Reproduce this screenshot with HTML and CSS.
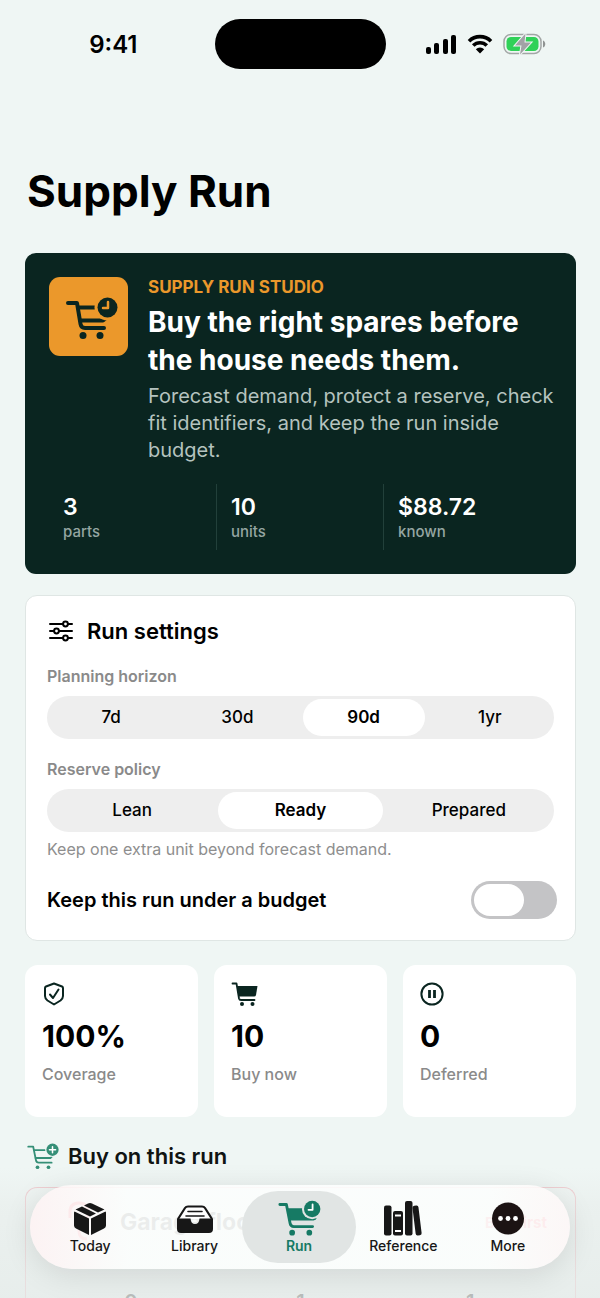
FILE: index.html
```html
<!DOCTYPE html>
<html lang="en">
<head>
<meta charset="utf-8">
<meta name="viewport" content="width=device-width, initial-scale=1">
<title>Supply Run</title>
<link rel="stylesheet" href="styles.css">
</head>

<body>

<div class="app">

	<header class="status">
		<span class="time">9:41</span>
		<span class="island"></span>
		<span class="signals">
			<svg width="31" height="20" viewBox="0 0 31 20">
				<rect x="0" y="13" width="5" height="7" rx="2"/>
				<rect x="8" y="9" width="5" height="11" rx="2"/>
				<rect x="17" y="5" width="5" height="15" rx="2"/>
				<rect x="25" y="1" width="5" height="19" rx="2"/>
			</svg>
			<svg width="26" height="20" viewBox="0 0 26 20">
				<path d="M2 7.200a15.600 15.600 0 0 1 22 0M6.200 11.500a9.600 9.600 0 0 1 13.600 0" fill="none" stroke="#000" stroke-width="3.600"/>
				<path d="M13 19.500l-4.200-4.300a6 6 0 0 1 8.400 0z"/>
			</svg>
			<svg width="43" height="22" viewBox="0 0 43 22">
				<rect x="1" y="1.500" width="37" height="19" rx="7" fill="none" stroke="#a2a6a5" stroke-width="1.500"/>
				<rect x="3.500" y="4" width="32" height="14" rx="4.500" fill="#30d158"/>
				<path d="M40 7.500c3 1 3 6 0 7z" fill="#8f9392"/>
				<path d="M22.500 .500L12 12.500h6.500L17 21.500 28 9.500h-6.500z" fill="#a2a2a6" stroke="#f0f6f4" stroke-width="2" paint-order="stroke"/>
			</svg>
		</span>
	</header>

	<main>
		<h1>Supply Run</h1>

		<section class="hero">
			<div class="intro">
				<div class="badge">
					<svg width="60" height="46" viewBox="-7 -2 60 46">
						<g fill="none" stroke="#0a2520" stroke-width="4" stroke-linecap="round" stroke-linejoin="round">
							<path d="M2 7h9l3.500 21q.700 4 4.500 4h19"/>
							<path d="M13 11.500h19M15 24.500h22l5-4"/>
						</g>
						<circle cx="17" cy="39.500" r="3.500" fill="#0a2520"/>
						<circle cx="34" cy="39.500" r="3.500" fill="#0a2520"/>
						<circle cx="41.500" cy="11.500" r="13" fill="#eb982b"/>
						<circle cx="41.500" cy="11.500" r="10" fill="#0a2520"/>
						<path d="M42 6v6h-5" fill="none" stroke="#eb982b" stroke-width="2.500" stroke-linecap="round" stroke-linejoin="round"/>
					</svg>
				</div>
				<div class="pitch">
					<p class="kicker">SUPPLY RUN STUDIO</p>
					<h2>Buy the right spares before the house needs them.</h2>
					<p class="lead">Forecast demand, protect a reserve, check fit identifiers, and keep the run inside budget.</p>
				</div>
			</div>
			<dl class="totals">
				<div><dd>3</dd><dt>parts</dt></div>
				<div><dd>10</dd><dt>units</dt></div>
				<div><dd>$88.72</dd><dt>known</dt></div>
			</dl>
		</section>

		<section class="settings">
			<h3>
				<svg width="26" height="22" viewBox="0 0 26 22" fill="none" stroke="#000" stroke-width="2" stroke-linecap="round">
					<path d="M2 4h13M20 4h4M2 11h4M11 11h13M2 18h13M20 18h4"/>
					<circle cx="17.500" cy="4" r="2.400"/>
					<circle cx="8.500" cy="11" r="2.400"/>
					<circle cx="17.500" cy="18" r="2.400"/>
				</svg>
				Run settings
			</h3>

			<fieldset>
				<legend>Planning horizon</legend>
				<div class="segments">
					<label><input type="radio" name="horizon"><span>7d</span></label>
					<label><input type="radio" name="horizon"><span>30d</span></label>
					<label><input type="radio" name="horizon" checked><span>90d</span></label>
					<label><input type="radio" name="horizon"><span>1yr</span></label>
				</div>
			</fieldset>

			<fieldset>
				<legend>Reserve policy</legend>
				<div class="segments">
					<label><input type="radio" name="policy"><span>Lean</span></label>
					<label><input type="radio" name="policy" checked><span>Ready</span></label>
					<label><input type="radio" name="policy"><span>Prepared</span></label>
				</div>
			</fieldset>
			<p class="hint">Keep one extra unit beyond forecast demand.</p>

			<div class="budget">
				<label for="budget">Keep this run under a budget</label>
				<input type="checkbox" id="budget" class="toggle">
			</div>
		</section>

		<section class="tiles">
			<div class="tile">
				<svg width="24" height="24" viewBox="0 0 24 24" fill="none" stroke="#0a2520" stroke-width="2" stroke-linecap="round" stroke-linejoin="round">
					<path d="M12 1.500L20 4.500Q21 5 21 6v8q0 2.500-2.500 4.500L12 22.500l-6.500-4Q3 16.500 3 14V6q0-1 1-1.500z"/>
					<path d="M8 12.500l3 3.500 5.500-8.500"/>
				</svg>
				<strong>100%</strong>
				<span>Coverage</span>
			</div>
			<div class="tile">
				<svg width="28" height="24" viewBox="0 0 28 24">
					<path d="M6 4h20.500l-1.500 9q-.300 1.500-2 1.500H8z" fill="#0a2520"/>
					<path d="M1.500 1.500h4l2.500 15q.300 1.500 2 1.500h13.500" fill="none" stroke="#0a2520" stroke-width="1.800" stroke-linecap="round" stroke-linejoin="round"/>
					<circle cx="11" cy="22" r="2" fill="#0a2520"/>
					<circle cx="21.500" cy="22" r="2" fill="#0a2520"/>
				</svg>
				<strong>10</strong>
				<span>Buy now</span>
			</div>
			<div class="tile">
				<svg width="24" height="24" viewBox="0 0 24 24" fill="none" stroke="#0a2520">
					<circle cx="12" cy="12" r="10.600" stroke-width="2"/>
					<path d="M9.500 8v8M14.500 8v8" stroke-width="2.800"/>
				</svg>
				<strong>0</strong>
				<span>Deferred</span>
			</div>
		</section>

		<h3 class="list-title">
			<svg width="32" height="27" viewBox="0 0 52 44">
				<g fill="none" stroke="#358f77" stroke-width="3" stroke-linecap="round" stroke-linejoin="round">
					<path d="M2 6h8l4.500 22q.700 4 4.500 4h21"/>
					<path d="M12 11.500h20M14 24.500h24l4-4"/>
				</g>
				<circle cx="17" cy="39.500" r="3" fill="#358f77"/>
				<circle cx="35" cy="39.500" r="3" fill="#358f77"/>
				<circle cx="41.500" cy="11" r="12" fill="#eff6f4"/>
				<circle cx="41.500" cy="11" r="10" fill="#358f77"/>
				<path d="M41.500 6v10M36.500 11h10" stroke="#fff" stroke-width="2.500" stroke-linecap="round"/>
			</svg>
			Buy on this run
		</h3>

		<article class="part">
			<div class="part-head">
				<svg width="34" height="44" viewBox="0 0 34 44" fill="none" stroke="#ff3b50" stroke-width="3">
					<path d="M4 18v-6q0-9 9-9t9 9-9 13v6q0 8 8 8"/>
				</svg>
				<strong>Garage flood battery</strong>
				<em>Buy first</em>
			</div>
			<div class="counts">
				<span>0</span><span>1</span><span>1</span>
			</div>
		</article>
	</main>

	<div class="fade"></div>

	<nav>
		<a href="#today">
			<svg width="36" height="36" viewBox="0 0 36 36" fill="#171717">
				<path d="M2.500 11.500L17 18.500V35L4 28.500Q2 27.500 2 25.500V12.500zM33.500 11.500L19 18.500V35l13-6.500q2-1 2-3V12.500z"/>
				<path d="M3.500 9.500L10 6.500l14 7-6 3zM12 5.500L16 3.500q2-1 4 0L32.500 9.500 26 12.500z"/>
			</svg>
			Today
		</a>
		<a href="#library">
			<svg width="38" height="36" viewBox="0 0 38 36">
				<path d="M2 19L9 8q1-1.500 3-1.500h14q2 0 3 1.500l7 11" fill="#fff" stroke="#171717" stroke-width="2.200"/>
				<path d="M12 11.500h14M10 16h18" stroke="#171717" stroke-width="1.600" stroke-linecap="round"/>
				<path d="M1 18.500h13.500q.500 5.500 4.500 5.500t4.500-5.500H37V29q0 4-4 4H5q-4 0-4-4z" fill="#171717"/>
			</svg>
			Library
		</a>
		<a href="#run" class="active">
			<svg width="43" height="36" viewBox="0 0 52 44">
				<path d="M11 10h39l-3 12q-.500 3-4 3H14z" fill="#167a64"/>
				<path d="M2 5.500h8l4.500 23q.700 4 4.500 4h23" fill="none" stroke="#167a64" stroke-width="3.500" stroke-linecap="round" stroke-linejoin="round"/>
				<circle cx="17" cy="40" r="3.500" fill="#167a64"/>
				<circle cx="38" cy="40" r="3.500" fill="#167a64"/>
				<circle cx="41.500" cy="11" r="12.500" fill="#e1e5e4"/>
				<circle cx="41.500" cy="11" r="10" fill="#167a64"/>
				<path d="M42 5.500v6.500h-5" fill="none" stroke="#fff" stroke-width="2.200" stroke-linecap="round" stroke-linejoin="round"/>
			</svg>
			Run
		</a>
		<a href="#reference">
			<svg width="40" height="36" viewBox="0 0 40 36" fill="#171717">
				<rect x="1" y="5.500" width="7.500" height="30" rx="2"/>
				<rect x="10" y="11" width="10" height="24.500" rx="2"/>
				<rect x="22" y="1" width="7.500" height="34.500" rx="2"/>
				<rect x="31" y="5.500" width="6" height="30" rx="2" transform="rotate(-7 34 20)"/>
				<path d="M12 15.500h6M12 31h6" stroke="#fff" stroke-width="2"/>
			</svg>
			Reference
		</a>
		<a href="#more">
			<svg width="36" height="36" viewBox="0 0 36 36">
				<circle cx="18" cy="18.500" r="16" fill="#1c1313"/>
				<circle cx="10.500" cy="18.500" r="2.400" fill="#fff"/>
				<circle cx="18" cy="18.500" r="2.400" fill="#fff"/>
				<circle cx="25.500" cy="18.500" r="2.400" fill="#fff"/>
			</svg>
			More
		</a>
	</nav>

</div>

</body>
</html>
```
FILE: styles.css
```css
* {
	box-sizing: border-box;
	margin: 0;
	padding: 0;
}

body {
	background-color: #eff6f4;
	color: #000;
	font-family: Inter, "Liberation Sans", sans-serif;
}

svg {
	display: block;
	flex: none;
}

.app {
	position: relative;
	height: 100vh;
	overflow: hidden;
}

/* status bar */
.status {
	display: grid;
	grid-template-columns: 1fr 171px 1fr;
	align-items: center;
	padding-top: 19px;
}

.time {
	justify-self: end;
	margin-right: 77px;
	font-size: 24px;
	font-weight: 600;
}

.island {
	height: 50px;
	border-radius: 25px;
	background-color: #000;
}

.signals {
	display: flex;
	align-items: center;
	gap: 10px;
	padding-left: 40px;
}

main {
	padding: 96px 24px 0 25px;
}

h1 {
	margin-bottom: 36px;
	padding-left: 2px;
	font-size: 44px;
	font-weight: 700;
	line-height: 52px;
}

/* hero card */
.hero {
	padding: 24px 14px 24px 24px;
	border-radius: 11px;
	background-color: #0a2520;
	color: #fff;
}

.intro {
	display: flex;
	gap: 20px;
}

.badge {
	display: flex;
	flex: none;
	align-items: center;
	justify-content: center;
	width: 79px;
	height: 79px;
	border-radius: 11px;
	background-color: #eb982b;
}

.kicker {
	color: #eb982b;
	font-size: 17px;
	font-weight: 700;
	line-height: 20px;
}

.hero h2 {
	margin: 6px 0 4px;
	font-size: 28px;
	font-weight: 700;
	line-height: 38px;
}

.lead {
	color: #b5c3bf;
	font-size: 20px;
	line-height: 27px;
}

.totals {
	display: grid;
	grid-template-columns: repeat(3, 1fr);
	margin: 20px 12px 0 0;
}

.totals div {
	height: 66px;
	padding: 9px 14px;
}

.totals div + div {
	border-left: 1px solid #22403a;
}

.totals dd {
	font-size: 23px;
	font-weight: 600;
	line-height: 28px;
}

.totals dt {
	color: #95a6a2;
	font-size: 15px;
	font-weight: 500;
	line-height: 22px;
}

/* settings card */
.settings {
	margin-top: 21px;
	padding: 21px;
	border: 1px solid #dfe6e4;
	border-radius: 12px;
	background-color: #fff;
}

h3 {
	display: flex;
	align-items: center;
	gap: 13px;
	font-size: 22px;
	font-weight: 600;
	line-height: 28px;
}

.settings h3 {
	padding-left: 1px;
}

fieldset {
	margin-top: 20px;
	border: 0;
}

fieldset + fieldset {
	margin-top: 19px;
}

legend {
	color: #8a8a8a;
	font-size: 16px;
	font-weight: 600;
	line-height: 22px;
}

.segments {
	display: flex;
	gap: 4px;
	margin-top: 9px;
	padding: 3px;
	border-radius: 22px;
	background-color: #eee;
}

.segments label {
	flex: 1;
}

.segments input {
	position: absolute;
	opacity: 0;
}

.segments span {
	display: block;
	border-radius: 19px;
	font-size: 17px;
	font-weight: 500;
	line-height: 37px;
	text-align: center;
}

.segments input:checked + span {
	background-color: #fff;
	font-weight: 600;
}

.hint {
	margin-top: 6px;
	color: #8e8e8e;
	font-size: 16px;
	line-height: 22px;
}

.budget {
	display: flex;
	align-items: center;
	justify-content: space-between;
	margin: 21px -3px 0 0;
}

.budget label {
	font-size: 20px;
	font-weight: 600;
}

.toggle {
	appearance: none;
	width: 86px;
	height: 38px;
	padding: 3px;
	border-radius: 19px;
	background-color: #c4c4c6;
}

.toggle::before {
	content: "";
	display: block;
	width: 50px;
	height: 32px;
	border-radius: 16px;
	background-color: #fff;
}

.toggle:checked {
	background-color: #167a64;
}

.toggle:checked::before {
	margin-left: 30px;
}

/* tiles */
.tiles {
	display: grid;
	grid-template-columns: repeat(3, 1fr);
	gap: 16px;
	margin-top: 24px;
}

.tile {
	height: 152px;
	padding: 17px;
	border-radius: 13px;
	background-color: #fff;
}

.tile strong {
	display: block;
	margin: 12px 0 10px;
	font-size: 30px;
	font-weight: 700;
	line-height: 36px;
}

.tile span {
	color: #8a8a8a;
	font-size: 16px;
	font-weight: 500;
	line-height: 16px;
}

.list-title {
	gap: 9px;
	margin-top: 25px;
	padding-left: 2px;
	color: #101413;
}

/* part card that scrolls under the tab bar */
.part {
	margin-top: 17px;
	border: 1px solid #f0c4c9;
	border-bottom: 0;
	border-radius: 12px;
	background-color: #f0f6f4;
}

.part-head {
	display: flex;
	align-items: center;
	gap: 20px;
	height: 104px;
	padding: 0 28px 36px 40px;
}

.part-head strong {
	flex: 1;
	font-size: 23px;
	font-weight: 700;
}

.part-head em {
	color: #ff3b50;
	font-size: 15px;
	font-style: normal;
	font-weight: 700;
}

.counts {
	display: grid;
	grid-template-columns: repeat(3, 1fr);
	padding: 0 20px;
	color: #555;
	font-size: 20px;
	font-weight: 600;
	line-height: 20px;
	text-align: center;
}

.fade {
	position: absolute;
	right: 0;
	bottom: 0;
	left: 0;
	height: 130px;
	background: linear-gradient(rgba(236, 242, 240, 0), rgba(230, 235, 233, .5) 30%, rgba(228, 234, 232, .7));
}

/* tab bar */
nav {
	position: absolute;
	z-index: 1;
	right: 30px;
	bottom: 29px;
	left: 30px;
	display: flex;
	height: 84px;
	padding: 6px 10px 6px 8px;
	border-radius: 42px;
	background: linear-gradient(90deg, rgba(255, 243, 244, .86), rgba(253, 255, 254, .86) 18%, rgba(253, 255, 254, .86) 85%, rgba(255, 248, 248, .85));
	box-shadow: 0 6px 30px rgba(0, 0, 0, .1);
}

nav a {
	position: relative;
	display: flex;
	flex: 1;
	flex-direction: column;
	align-items: center;
	padding-top: 9px;
	color: #171717;
	font-size: 14px;
	font-weight: 500;
	line-height: 20px;
	text-decoration: none;
}

nav .active {
	color: #167a64;
	font-weight: 600;
}

nav .active::before {
	content: "";
	position: absolute;
	z-index: -1;
	top: 0;
	right: -5px;
	bottom: 0;
	left: -5px;
	border-radius: 36px;
	background-color: #e1e5e4;
}
```
